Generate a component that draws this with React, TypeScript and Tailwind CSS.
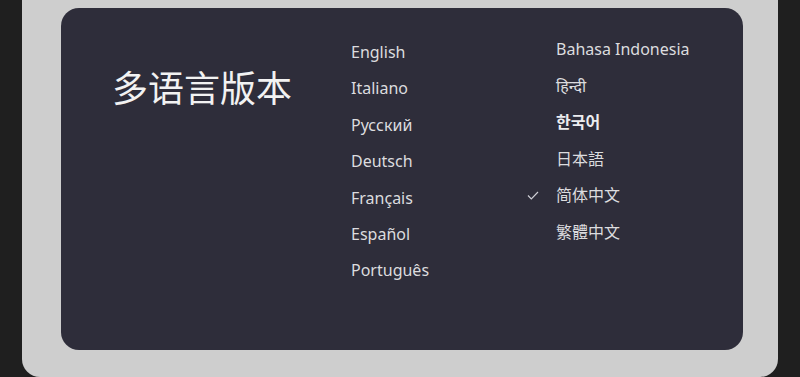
const left = ["English", "Italiano", "Русский", "Deutsch", "Français", "Español", "Português"];

const right = [
  { label: "Bahasa Indonesia" },
  { label: "हिन्दी" },
  { label: "한국어", bold: true },
  { label: "日本語" },
  { label: "简体中文", active: true },
  { label: "繁體中文" },
];

function Check() {
  return (
    <svg width="12" height="9" viewBox="0 0 12 9" fill="none" className="absolute left-[-29px] top-[14px]">
      <path d="M1 4.5 L4.3 7.8 L11 1" stroke="#cfcfd6" strokeWidth="1.2" />
    </svg>
  );
}

export default function App() {
  return (
    <div
      className="h-[377px] w-[800px] bg-[#1f1f1f] px-[22px]"
      style={{ fontFamily: '"Noto Sans", "Noto Sans CJK SC", sans-serif' }}
    >
      <div className="h-full rounded-b-[18px] bg-[#cecece] pl-[39px] pr-[35px] pt-[8px]">
        <div className="flex h-[342px] rounded-[18px] bg-[#2e2d3a] text-[#dcdcdf]">
          <div className="w-[290px] pl-[51px] pt-[53px]">
            <h1 className="text-[36px] leading-[50px] text-[#f2f2f2]" style={{ fontFamily: '"Noto Sans CJK SC", serif' }}>
              多语言版本
            </h1>
          </div>
          <ul className="w-[205px] pt-[26px] text-[16px]">
            {left.map((l) => (
              <li key={l} className="h-[36.4px] leading-[36px]">
                {l}
              </li>
            ))}
          </ul>
          <ul className="pt-[23px] text-[16px]">
            {right.map((r) => (
              <li
                key={r.label}
                className={`relative h-[36.6px] leading-[36px] ${r.bold ? "font-bold text-[#ececef]" : ""}`}
              >
                {r.active && <Check />}
                {r.label}
              </li>
            ))}
          </ul>
        </div>
      </div>
    </div>
  );
}
